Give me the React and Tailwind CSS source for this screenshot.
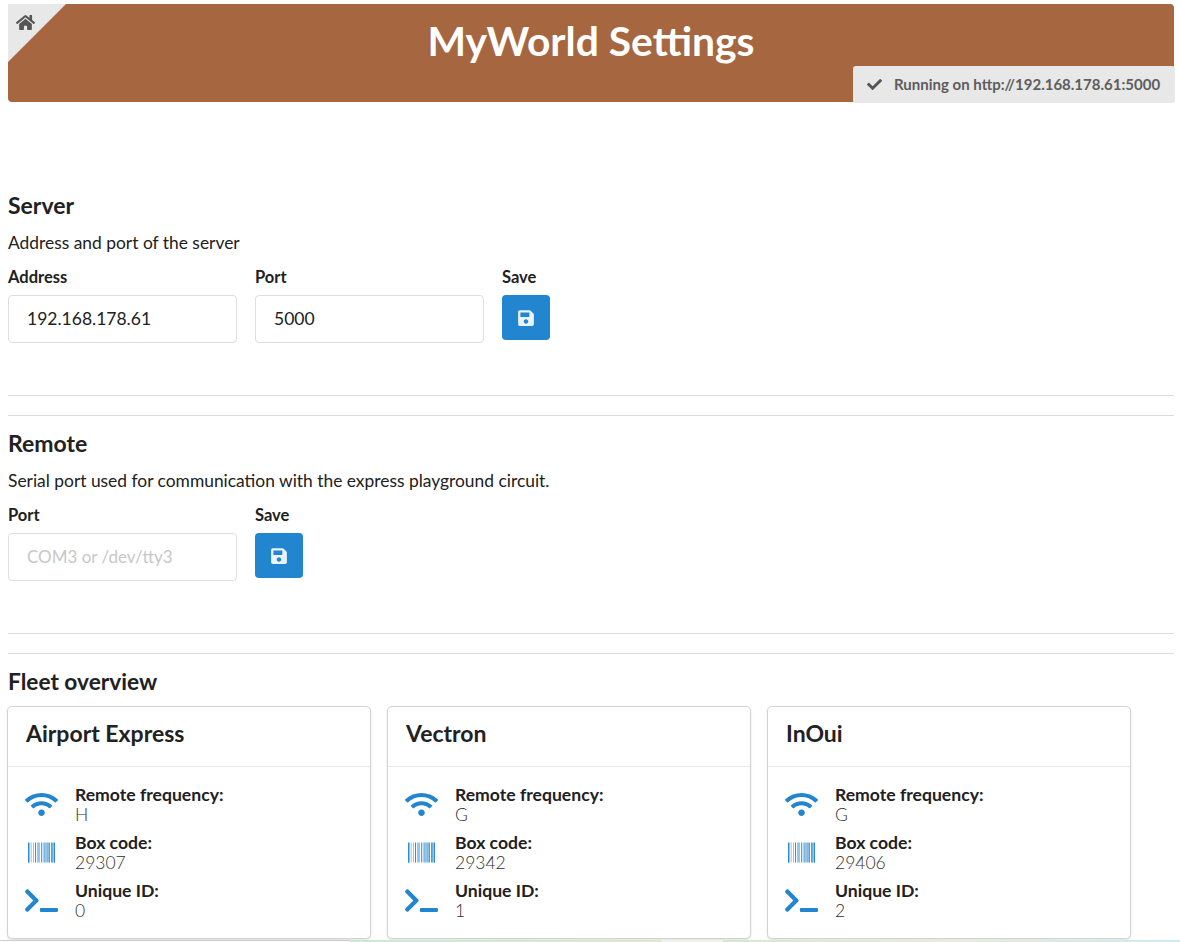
import { FaHome, FaCheck, FaSave, FaWifi, FaBarcode, FaTerminal } from 'react-icons/fa'

const fleet = [
  { name: 'Airport Express', frequency: 'H', code: '29307', id: '0' },
  { name: 'Vectron', frequency: 'G', code: '29342', id: '1' },
  { name: 'InOui', frequency: 'G', code: '29406', id: '2' },
]

function Field({ label, value, placeholder }) {
  return (
    <div className="w-[229px]">
      <div className="text-[16.5px] leading-[18px] font-bold text-[#212121] mb-[9px]">{label}</div>
      <input
        readOnly
        value={value}
        placeholder={placeholder}
        className="w-full h-[48px] px-[18px] pb-[1px] text-[17.5px] text-[#212121] placeholder:text-[17px] placeholder:text-[#c7c7c7] border border-[#dedede] rounded-[4px] outline-none bg-white"
      />
    </div>
  )
}

function SaveField() {
  return (
    <div>
      <div className="text-[16.5px] leading-[18px] font-bold text-[#212121] mb-[9px]">Save</div>
      <button className="w-[48px] h-[45px] flex items-center justify-center bg-[#2185d0] rounded-[4px] text-white/90">
        <FaSave size={18} />
      </button>
    </div>
  )
}

function InfoRow({ icon, label, value }) {
  return (
    <div className="flex items-center h-[48px]">
      <div className="w-[33px] -ml-[1px] mr-[17px] flex justify-center text-[#2185d0]">{icon}</div>
      <div>
        <div className="text-[17.6px] leading-[21px] font-bold text-[#212121]">{label}</div>
        <div className="text-[17.5px] leading-[20px] font-light text-[#2f2f2f]">{value}</div>
      </div>
    </div>
  )
}

function Card({ ship }) {
  return (
    <div className="w-[364px] h-[233px] border border-[#d4d4d5] rounded-[5px] shadow-[0_1px_2px_rgba(34,36,38,0.15)] bg-white">
      <div className="h-[60px] px-[18px] pb-[6px] flex items-center border-b border-[#e8e8e8] text-[23px] font-bold text-[#212121]">
        {ship.name}
      </div>
      <div className="px-[18px] pt-[13px]">
        <InfoRow icon={<FaWifi size={33} />} label="Remote frequency:" value={ship.frequency} />
        <InfoRow icon={<FaBarcode size={27} />} label="Box code:" value={ship.code} />
        <InfoRow icon={<FaTerminal size={33} />} label="Unique ID:" value={ship.id} />
      </div>
    </div>
  )
}

export default function App() {
  return (
    <div className="h-[942px] overflow-hidden bg-white pt-[4px] font-['Lato','Noto_Sans',sans-serif] relative">
      {/* Header */}
      <div className="relative ml-[8px] w-[1166px] h-[98px] bg-[#a66740] rounded-[4px] flex items-center justify-center">
        <div className="absolute left-0 top-0 w-[58px] h-[58px] bg-[#e8e8e8] [clip-path:polygon(0_0,100%_0,0_100%)]" />
        <FaHome size={19} className="absolute left-[8px] top-[9px] text-[#555]" />
        <h1 className="text-[40.8px] font-bold text-white pb-[24px]">MyWorld Settings</h1>
        <div className="absolute right-[-1px] top-[62px] w-[322px] h-[37px] bg-[#e8e8e8] rounded-[3px] flex items-center pl-[14px] text-[15px] font-bold text-[#5d5d5d]">
          <FaCheck size={15} className="mr-[12px] text-[#555]" />
          Running on http://192.168.178.61:5000
        </div>
      </div>

      <div className="ml-[8px] w-[1166px]">
        {/* Server */}
        <h3 className="mt-[89px] text-[23px] leading-[28px] font-bold text-[#212121]">Server</h3>
        <p className="mt-[14px] text-[17.4px] leading-[20px] text-[#212121]">Address and port of the server</p>
        <div className="mt-[15px] flex gap-[18px]">
          <Field label="Address" value="192.168.178.61" />
          <Field label="Port" value="5000" />
          <SaveField />
        </div>
        <div className="mt-[52px] border-t border-[#dcdcdc]" />
        <div className="mt-[19px] border-t border-[#dcdcdc]" />

        {/* Remote */}
        <h3 className="mt-[13px] text-[23px] leading-[28px] font-bold text-[#212121]">Remote</h3>
        <p className="mt-[14px] text-[17.4px] leading-[20px] text-[#212121]">Serial port used for communication with the express playground circuit.</p>
        <div className="mt-[15px] flex gap-[18px]">
          <Field label="Port" placeholder="COM3 or /dev/tty3" />
          <SaveField />
        </div>
        <div className="mt-[52px] border-t border-[#dcdcdc]" />
        <div className="mt-[19px] border-t border-[#dcdcdc]" />

        {/* Fleet */}
        <h3 className="mt-[14px] text-[22.7px] leading-[28px] font-bold text-[#212121]">Fleet overview</h3>
        <div className="mt-[10px] -ml-[1px] flex gap-[16px]">
          {fleet.map((ship) => (
            <Card key={ship.id} ship={ship} />
          ))}
        </div>
      </div>

      {/* Strip of the window behind, at the bottom edge */}
      <div className="absolute left-0 right-0 bottom-0 h-[2px] flex">
        <div className="w-[349px] border-t border-[#cccccc] bg-white" />
        <div className="w-[313px] bg-gradient-to-r from-[#cde8d8] to-[#dde9d0]" />
        <div className="w-[61px] bg-[#eef4ea]" />
        <div className="flex-1 bg-gradient-to-r from-[#d5e8d4] via-[#e8ecdc] to-[#cfe9ee]" />
      </div>
    </div>
  )
}
